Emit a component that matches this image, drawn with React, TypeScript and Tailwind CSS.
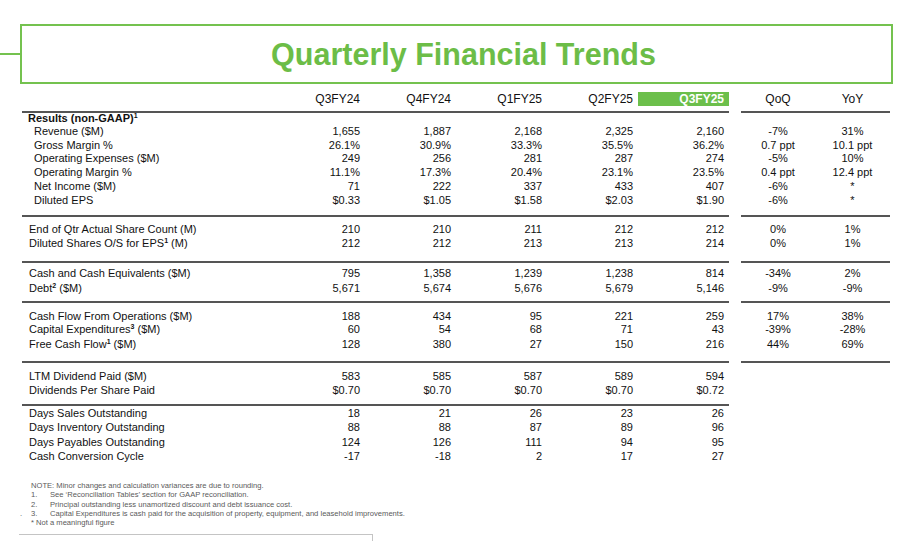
import React from "react";

type RowData = {
  label: React.ReactNode;
  vals?: string[];
  qoq?: string;
  yoy?: string;
  h: string;
  pad?: string;
  bold?: boolean;
};

const GREEN_LINE = "bg-[#74c24f]";

function Sup({ n }: { n: number }) {
  return <sup className="-top-[4px] text-[7px] font-bold">{n}</sup>;
}

function Row({ label, vals = [], qoq = "", yoy = "", h, pad = "pl-[7px]", bold }: RowData) {
  return (
    <div className={`flex items-center pl-[22px] text-[11px] leading-none ${h}`}>
      <div className={`w-[252px] whitespace-nowrap ${pad} ${bold ? "font-bold" : ""}`}>{label}</div>
      {[0, 1, 2, 3, 4].map((i) => (
        <div key={i} className="w-[91px] pr-[5px] text-right">
          {vals[i] ?? ""}
        </div>
      ))}
      <div className="ml-[12px] w-[74px] text-center">{qoq}</div>
      <div className="w-[75px] text-center">{yoy}</div>
    </div>
  );
}

function Divider({ mt, right = true }: { mt: string; right?: boolean }) {
  return (
    <div className={`flex pl-[22px] ${mt}`}>
      <div className="h-[2px] w-[707px] bg-[#555]" />
      {right && <div className="ml-[12px] h-[2px] w-[149px] bg-[#555]" />}
    </div>
  );
}

export default function App() {
  const sub = "pl-[12px]";
  return (
    <div
      className="relative h-[541px] w-[900px] overflow-hidden bg-white pt-[24px] text-[#111]"
      style={{ fontFamily: "'Liberation Sans', Arial, sans-serif" }}
    >
      {/* title */}
      <div className="flex items-center">
        <div className={`h-[2px] w-[20px] ${GREEN_LINE}`} />
        <div className="mr-[7px] flex h-[60px] flex-1 items-center justify-center border-2 border-[#74c24f]">
          <h1 className="pl-[14px] text-[30.5px] font-bold leading-none text-[#6cbd47]">Quarterly Financial Trends</h1>
        </div>
      </div>

      {/* column headers */}
      <div className="mt-[8px] flex h-[14px] items-center pl-[22px] text-[12px] leading-none">
        <div className="w-[252px]" />
        {["Q3FY24", "Q4FY24", "Q1FY25", "Q2FY25"].map((q) => (
          <div key={q} className="w-[91px] pr-[5px] text-right">
            {q}
          </div>
        ))}
        <div className="flex h-[14px] w-[91px] items-center justify-end bg-[#6cbf4b] pr-[5px] font-bold text-white">
          Q3FY25
        </div>
        <div className="ml-[12px] w-[74px] text-center">QoQ</div>
        <div className="w-[75px] text-center">YoY</div>
      </div>

      <Divider mt="mt-[5px]" />
      <Row h="h-[11px]" pad="pl-[6px]" bold label={<>Results (non-GAAP)<Sup n={1} /></>} />
      <Row h="h-[14px]" pad={sub} label="Revenue ($M)" vals={["1,655", "1,887", "2,168", "2,325", "2,160"]} qoq="-7%" yoy="31%" />
      <Row h="h-[14px]" pad={sub} label="Gross Margin %" vals={["26.1%", "30.9%", "33.3%", "35.5%", "36.2%"]} qoq="0.7 ppt" yoy="10.1 ppt" />
      <Row h="h-[13px]" pad={sub} label="Operating Expenses ($M)" vals={["249", "256", "281", "287", "274"]} qoq="-5%" yoy="10%" />
      <Row h="h-[14px]" pad={sub} label="Operating Margin %" vals={["11.1%", "17.3%", "20.4%", "23.1%", "23.5%"]} qoq="0.4 ppt" yoy="12.4 ppt" />
      <Row h="h-[14px]" pad={sub} label="Net Income ($M)" vals={["71", "222", "337", "433", "407"]} qoq="-6%" yoy="*" />
      <Row h="h-[15px]" pad={sub} label="Diluted EPS" vals={["$0.33", "$1.05", "$1.58", "$2.03", "$1.90"]} qoq="-6%" yoy="*" />

      <Divider mt="mt-[7px]" />
      <div className="mt-[5px]" />
      <Row h="h-[14px]" label="End of Qtr Actual Share Count (M)" vals={["210", "210", "211", "212", "212"]} qoq="0%" yoy="1%" />
      <Row h="h-[14px]" label={<>Diluted Shares O/S for EPS<Sup n={1} /> (M)</>} vals={["212", "212", "213", "213", "214"]} qoq="0%" yoy="1%" />

      <Divider mt="mt-[11px]" />
      <div className="mt-[3px]" />
      <Row h="h-[15px]" label="Cash and Cash Equivalents ($M)" vals={["795", "1,358", "1,239", "1,238", "814"]} qoq="-34%" yoy="2%" />
      <Row h="h-[14px]" label={<>Debt<Sup n={2} /> ($M)</>} vals={["5,671", "5,674", "5,676", "5,679", "5,146"]} qoq="-9%" yoy="-9%" />

      <Divider mt="mt-[6px]" />
      <div className="mt-[6px]" />
      <Row h="h-[14px]" label="Cash Flow From Operations ($M)" vals={["188", "434", "95", "221", "259"]} qoq="17%" yoy="38%" />
      <Row h="h-[13px]" label={<>Capital Expenditures<Sup n={3} /> ($M)</>} vals={["60", "54", "68", "71", "43"]} qoq="-39%" yoy="-28%" />
      <Row h="h-[16px]" label={<>Free Cash Flow<Sup n={1} /> ($M)</>} vals={["128", "380", "27", "150", "216"]} qoq="44%" yoy="69%" />

      <Divider mt="mt-[9px]" />
      <div className="mt-[6px]" />
      <Row h="h-[14px]" label="LTM Dividend Paid ($M)" vals={["583", "585", "587", "589", "594"]} />
      <Row h="h-[14px]" label="Dividends Per Share Paid" vals={["$0.70", "$0.70", "$0.70", "$0.70", "$0.72"]} />

      <Divider mt="mt-[7px]" right={false} />
      <Row h="h-[14px]" label="Days Sales Outstanding" vals={["18", "21", "26", "23", "26"]} />
      <Row h="h-[15px]" label="Days Inventory Outstanding" vals={["88", "88", "87", "89", "96"]} />
      <Row h="h-[14px]" label="Days Payables Outstanding" vals={["124", "126", "111", "94", "95"]} />
      <Row h="h-[15px]" label="Cash Conversion Cycle" vals={["-17", "-18", "2", "17", "27"]} />

      {/* footnotes */}
      <div className="mt-[17px] pl-[20px] text-[7.6px] leading-[9.25px] text-[#5a5a5a]">
        <div className="pl-[11px]">NOTE: Minor changes and calculation variances are due to rounding.</div>
        {[
          ["1.", "See \u2018Reconciliation Tables\u2019 section for GAAP reconciliation."],
          ["2.", "Principal outstanding less unamortized discount and debt issuance cost."],
          ["3.", "Capital Expenditures is cash paid for the acquisition of property, equipment, and leasehold improvements."],
        ].map(([n, t]) => (
          <div key={n} className="flex">
            <span className="w-[11px]">{n === "3." ? "." : ""}</span>
            <span className="w-[19px]">{n}</span>
            <span>{t}</span>
          </div>
        ))}
        <div className="pl-[11px]">* Not a meaningful figure</div>
      </div>

      <div className="ml-[19px] mt-[7px] h-[8px] w-[354px] border-r border-t border-[#c4c4c4]" />
    </div>
  );
}
